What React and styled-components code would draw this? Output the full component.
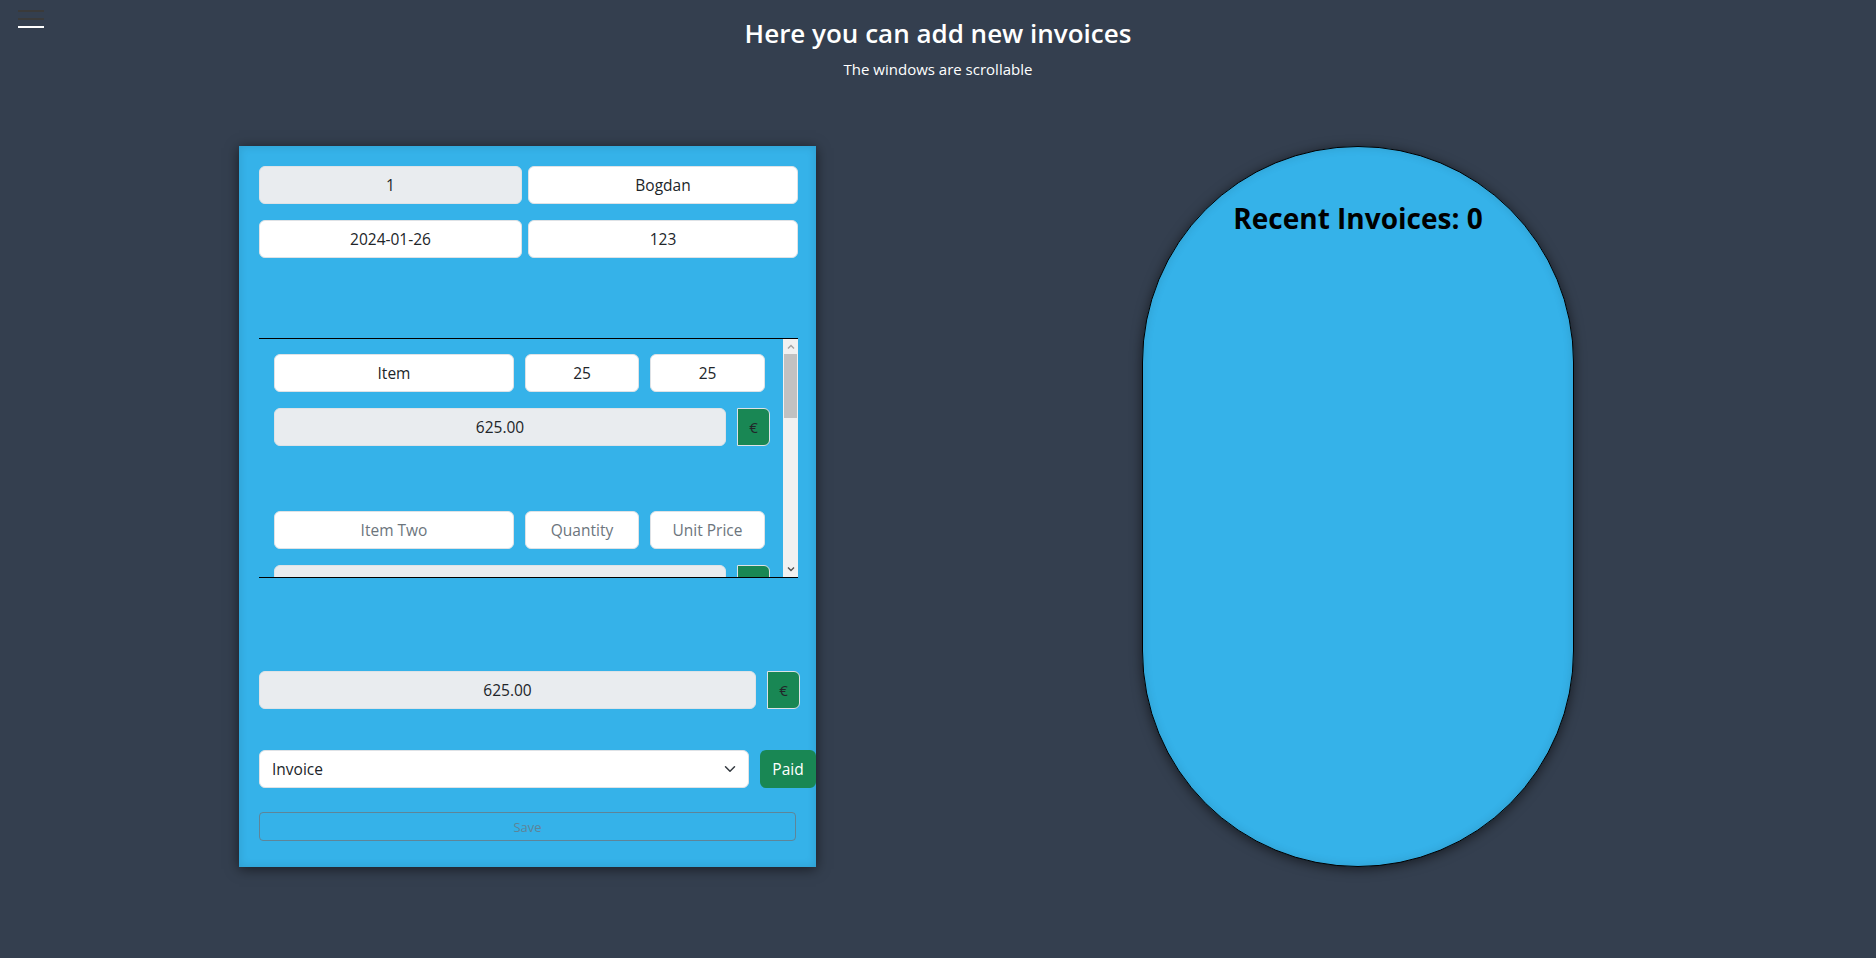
import styled, { createGlobalStyle } from 'styled-components';

const GlobalStyle = createGlobalStyle`
    * { box-sizing: border-box; }
    body {
        margin: 0;
        background: #343f4f;
        font-family: "Open Sans", "Noto Sans", sans-serif;
        color: #212529;
    }
`;

const Page = styled.div`
    position: relative;
    min-height: 958px;
`;

const Burger = styled.button`
    position: absolute;
    top: 10px;
    left: 18px;
    width: 26px;
    padding: 0;
    border: 0;
    background: none;
    display: flex;
    flex-direction: column;
    gap: 6px;
`;

const BurgerLine = styled.span`
    display: block;
    height: 2px;
    background: ${p => (p.$light ? '#ffffff' : '#3a3a3a')};
`;

const Header = styled.header`
    text-align: center;
    color: #fff;
    padding-top: 16px;
`;

const Title = styled.h3`
    margin: 0;
    font-size: 26px;
    font-weight: 600;
    line-height: 34px;
`;

const Subtitle = styled.p`
    margin: 8px 0 0;
    font-size: 15px;
    line-height: 22px;
`;

const Main = styled.main`
    display: flex;
    align-items: flex-start;
    gap: 326px;
    padding: 66px 0 0 239px;
`;

const Card = styled.section`
    width: 577px;
    height: 721px;
    padding: 20px 18px 0 20px;
    background: #35b2e9;
    box-shadow: inset 0 0 10px rgba(0, 0, 0, 0.12), 0 2px 12px rgba(0, 0, 0, 0.55);
`;

const Grid = styled.div`
    display: grid;
    grid-template-columns: ${p => p.$cols};
    gap: ${p => p.$gap || '6px'};
    margin-top: ${p => p.$mt || '0'};
`;

const Field = styled.input`
    width: ${p => p.$w || '100%'};
    flex: none;
    height: 38px;
    padding: 6px 12px;
    border: 1px solid #dee2e6;
    border-radius: 6px;
    background: ${p => (p.disabled ? '#e9ecef' : '#fff')};
    font: inherit;
    font-size: 15.5px;
    color: #212529;
    text-align: center;
    outline: none;
    &::placeholder { color: #6c757d; }
`;

const ScrollBox = styled.div`
    display: flex;
    margin-top: 80px;
    width: 539px;
    height: 240px;
    border-top: 1px solid #000;
    border-bottom: 1px solid #000;
`;

const ScrollContent = styled.div`
    flex: 1;
    overflow-y: auto;
    scrollbar-width: none;
    padding: 15px 0 0 15px;
    &::-webkit-scrollbar { display: none; }
`;

const Scrollbar = styled.div`
    flex: none;
    width: 15px;
    display: flex;
    flex-direction: column;
    background: #f1f1f1;
`;

const ScrollArrow = styled.div`
    height: 15px;
    display: flex;
    align-items: center;
    justify-content: center;
`;

const ScrollTrack = styled.div`
    flex: 1;
    padding: 0 1px;
`;

const ScrollThumb = styled.div`
    height: 64px;
    background: #c1c1c1;
`;

const ItemBlock = styled.div`
    margin-bottom: 65px;
`;

const Row = styled.div`
    display: flex;
    align-items: center;
    gap: 11px;
    margin-top: ${p => p.$mt || '0'};
`;

const Euro = styled.span`
    flex: none;
    width: 33px;
    height: 38px;
    display: flex;
    align-items: center;
    justify-content: center;
    background: #198754;
    border: 1px solid #dee2e6;
    border-radius: 0 6px 6px 0;
    font-size: 15px;
    color: #212529;
`;

const SelectWrap = styled.div`
    position: relative;
    width: 490px;
    flex: none;
`;

const Select = styled.select`
    width: 100%;
    height: 38px;
    padding: 6px 36px 6px 12px;
    border: 1px solid #dee2e6;
    border-radius: 6px;
    background: #fff;
    appearance: none;
    font: inherit;
    font-size: 15.5px;
    color: #212529;
`;

const Chevron = styled.svg`
    position: absolute;
    right: 13px;
    top: 13px;
    pointer-events: none;
`;

const PaidButton = styled.button`
    flex: none;
    width: 56px;
    height: 38px;
    border: 0;
    border-radius: 6px;
    background: #198754;
    color: #fff;
    font: inherit;
    font-size: 15.5px;
`;

const SaveButton = styled.button`
    display: block;
    width: 537px;
    height: 29px;
    margin-top: 24px;
    border: 1px solid #6c757d;
    border-radius: 4px;
    background: transparent;
    color: #6c757d;
    opacity: 0.75;
    font: inherit;
    font-size: 13px;
`;

const Recent = styled.section`
    width: 432px;
    height: 721px;
    border: 1px solid #000;
    border-radius: 216px;
    background: #35b2e9;
    box-shadow: inset 0 0 10px rgba(0, 0, 0, 0.12), 0 2px 12px rgba(0, 0, 0, 0.55);
    text-align: center;
    padding-top: 54px;
`;

const RecentTitle = styled.h3`
    margin: 0;
    font-size: 28px;
    font-weight: 700;
    line-height: 34px;
    color: #000;
`;

const items = [
    { name: 'Item', qty: '25', price: '25', total: '625.00', placeholder: 'Item' },
    { name: '', qty: '', price: '', total: '', placeholder: 'Item Two' },
    { name: '', qty: '', price: '', total: '', placeholder: 'Item Three' },
    { name: '', qty: '', price: '', total: '', placeholder: 'Item Four' },
    { name: '', qty: '', price: '', total: '', placeholder: 'Item Five' },
];

const Arrow = ({ up, color }) => (
    <svg width="8" height="5" viewBox="0 0 8 5">
        <path
            d={up ? 'M1 4.5L4 1.5 7 4.5' : 'M1 0.5L4 3.5 7 0.5'}
            fill="none"
            stroke={color}
            strokeWidth="1.4"
        />
    </svg>
);

const App = () => {
    return (
        <Page>
            <GlobalStyle />
            <Burger aria-label="menu">
                <BurgerLine />
                <BurgerLine />
                <BurgerLine $light />
            </Burger>

            <Header>
                <Title>Here you can add new invoices</Title>
                <Subtitle>The windows are scrollable</Subtitle>
            </Header>

            <Main>
                <Card>
                    <Grid $cols="263px 1fr">
                        <Field disabled defaultValue="1" />
                        <Field defaultValue="Bogdan" />
                    </Grid>
                    <Grid $cols="263px 1fr" $mt="16px">
                        <Field defaultValue="2024-01-26" />
                        <Field defaultValue="123" />
                    </Grid>

                    <ScrollBox>
                        <ScrollContent>
                            {items.map((item, i) => (
                                <ItemBlock key={i}>
                                    <Grid $cols="240px 114px 115px" $gap="11px">
                                        <Field defaultValue={item.name} placeholder={item.placeholder} />
                                        <Field defaultValue={item.qty} placeholder="Quantity" />
                                        <Field defaultValue={item.price} placeholder="Unit Price" />
                                    </Grid>
                                    <Row $mt="16px">
                                        <Field disabled defaultValue={item.total} $w="452px" />
                                        <Euro>€</Euro>
                                    </Row>
                                </ItemBlock>
                            ))}
                        </ScrollContent>
                        <Scrollbar>
                            <ScrollArrow><Arrow up color="#a3a3a3" /></ScrollArrow>
                            <ScrollTrack><ScrollThumb /></ScrollTrack>
                            <ScrollArrow><Arrow color="#505050" /></ScrollArrow>
                        </Scrollbar>
                    </ScrollBox>

                    <Row $mt="93px">
                        <Field disabled defaultValue="625.00" $w="497px" />
                        <Euro>€</Euro>
                    </Row>

                    <Row $mt="41px">
                        <SelectWrap>
                            <Select defaultValue="Invoice">
                                <option>Invoice</option>
                                <option>Offer</option>
                            </Select>
                            <Chevron width="12" height="12" viewBox="0 0 16 16">
                                <path d="M2 5l6 6 6-6" fill="none" stroke="#343a40" strokeWidth="2" strokeLinecap="round" strokeLinejoin="round" />
                            </Chevron>
                        </SelectWrap>
                        <PaidButton>Paid</PaidButton>
                    </Row>

                    <SaveButton disabled>Save</SaveButton>
                </Card>

                <Recent>
                    <RecentTitle>Recent Invoices: 0</RecentTitle>
                </Recent>
            </Main>
        </Page>
    );
};

export default App;
